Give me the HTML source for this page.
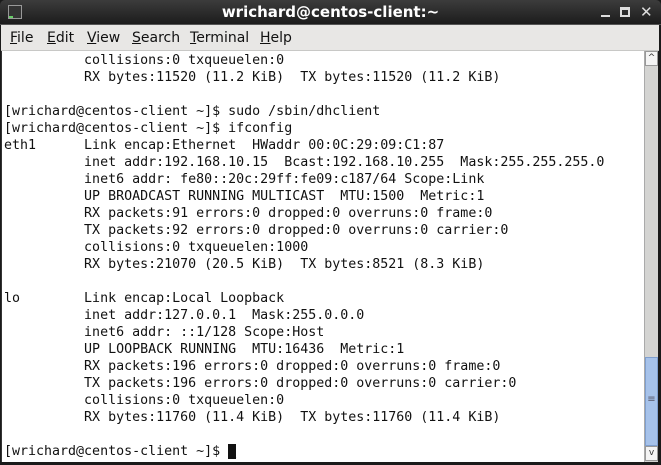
<!DOCTYPE html>
<html><head><style>
*{margin:0;padding:0;box-sizing:border-box}
body{width:661px;height:465px;overflow:hidden;background:#1a1a1a;position:relative;font-family:"DejaVu Sans","Liberation Sans",sans-serif}
#title{position:absolute;left:0;top:0;width:661px;height:25px;background:linear-gradient(#3c3c3c,#1c1c1c);border-radius:5px 5px 0 0;border-bottom:1px solid #555}
#title .t{position:absolute;left:0;width:661px;top:3px;text-align:center;color:#fff;font-weight:bold;font-size:15px}
#icon{position:absolute;left:8px;top:5px;width:14px;height:14px;background:#333;border:1px solid #999;}
#icon:after{content:"";position:absolute;left:0;bottom:0;width:4px;height:2px;background:#6c6}
#menu{position:absolute;left:1px;top:25px;width:658px;height:26px;background:#e8e7e5;border-bottom:1px solid #c8c8c6;font-size:14px;color:#111}
#menu span{position:absolute;top:5px}
#menu u{text-decoration:underline}
#term{position:absolute;left:1px;top:51px;width:643px;height:411px;background:#fff;border-left:1px solid #333}
pre{position:absolute;left:2px;top:1px;font-family:"DejaVu Sans Mono","Liberation Mono",monospace;font-size:13.3px;line-height:17px;color:#111}
#sb{position:absolute;left:644px;top:51px;width:14px;height:411px;background:#d4d4d2;border-left:1px solid #aaa}
.btn{position:absolute;left:0;width:13px;height:15px;background:#f4f4f4;border:1px solid #999;font-size:9px;text-align:center;color:#333;line-height:13px}
#thumb{position:absolute;left:0;top:306px;width:13px;height:89px;background:#a6c2ea;border:1px solid #7f9fcf;color:#556;font-size:10px;text-align:center;padding-top:36px}
.cur{background:#111;color:#111}
</style></head><body>
<div id="title"><div id="icon"></div><div class="t">wrichard@centos-client:~</div>
<div style="position:absolute;left:601px;top:15px;width:9px;height:2px;background:#ddd"></div>
<div style="position:absolute;left:620px;top:7px;width:10px;height:10px;border:2px solid #ddd;border-top-width:3px"></div>
<div style="position:absolute;left:640px;top:3px;color:#ddd;font-weight:bold;font-size:15px">✕</div>
</div>
<div id="menu"><span style="left:9px"><u>F</u>ile</span><span style="left:46px"><u>E</u>dit</span><span style="left:86px"><u>V</u>iew</span><span style="left:131px"><u>S</u>earch</span><span style="left:189px"><u>T</u>erminal</span><span style="left:259px"><u>H</u>elp</span></div>
<div id="term"><pre>          collisions:0 txqueuelen:0
          RX bytes:11520 (11.2 KiB)  TX bytes:11520 (11.2 KiB)

[wrichard@centos-client ~]$ sudo /sbin/dhclient
[wrichard@centos-client ~]$ ifconfig
eth1      Link encap:Ethernet  HWaddr 00:0C:29:09:C1:87
          inet addr:192.168.10.15  Bcast:192.168.10.255  Mask:255.255.255.0
          inet6 addr: fe80::20c:29ff:fe09:c187/64 Scope:Link
          UP BROADCAST RUNNING MULTICAST  MTU:1500  Metric:1
          RX packets:91 errors:0 dropped:0 overruns:0 frame:0
          TX packets:92 errors:0 dropped:0 overruns:0 carrier:0
          collisions:0 txqueuelen:1000
          RX bytes:21070 (20.5 KiB)  TX bytes:8521 (8.3 KiB)

lo        Link encap:Local Loopback
          inet addr:127.0.0.1  Mask:255.0.0.0
          inet6 addr: ::1/128 Scope:Host
          UP LOOPBACK RUNNING  MTU:16436  Metric:1
          RX packets:196 errors:0 dropped:0 overruns:0 frame:0
          TX packets:196 errors:0 dropped:0 overruns:0 carrier:0
          collisions:0 txqueuelen:0
          RX bytes:11760 (11.4 KiB)  TX bytes:11760 (11.4 KiB)

[wrichard@centos-client ~]$ <span class="cur">_</span></pre></div>
<div id="sb"><div class="btn" style="top:0">^</div><div id="thumb">≡</div><div class="btn" style="top:395px">v</div></div>
</body></html>
